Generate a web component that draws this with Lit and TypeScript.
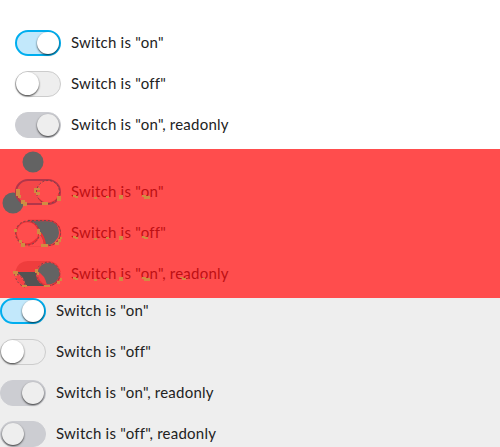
import { LitElement, html, svg, css } from "lit";
import { customElement, property } from "lit/decorators.js";

@customElement("switch-row")
class SwitchRow extends LitElement {
  @property() label = "";
  @property({ type: Boolean, reflect: true }) on = false;
  @property({ type: Boolean, reflect: true }) readonly = false;
  @property({ type: Boolean, reflect: true }) diff = false;
  static styles = css`
    :host { display: flex; align-items: center; gap: 10px; height: 26px; color: #222; }
    .track { box-sizing: border-box; width: 46px; height: 26px; border-radius: 13px; border: 1px solid #ccc;
      background: #eee; display: flex; align-items: center; padding: 0 1px 0 0; flex: none; }
    .thumb { width: 23px; height: 23px; border-radius: 50%; background: #fff; box-shadow: 0 1px 2px rgba(0,0,0,.75); margin-top: -1px; }
    :host([on]) .track { justify-content: flex-end; border: 2px solid #00aeef; background: #c2e8fb; padding: 0; }
    :host([on]) .thumb { width: 22px; height: 22px; margin-top: 0; }
    :host([readonly]) .track { background: #cccdd2; border: 1px solid #cccdd2; padding-right: 1px; }
    :host([readonly]) .thumb { background: #eee; width: 22px; height: 22px; margin-top: -1px; }
    :host([readonly]:not([on])) .track { padding-left: 1px; }
    .label { font: 15px/20px Lato, sans-serif; letter-spacing: .23px; white-space: pre; margin-bottom: 2px; }
    :host([diff]) { color: #bd1014; }
  `;
  render() {
    return html`${this.diff ? html`<slot></slot>` : html`<div class="track"><div class="thumb"></div></div>`}
      <span class="label">${this.label}</span>`;
  }
}

const marks = (list: number[][]) =>
  list.map(([x, y, w, h]) => svg`<rect class="mark" x=${x} y=${y} width=${w} height=${h}></rect>`);

@customElement("app-root")
class AppRoot extends LitElement {
  static styles = css`
    :host { display: flex; flex-direction: column; width: 500px; height: 447px; overflow: hidden; }
    section { display: flex; flex-direction: column; gap: 15px; box-sizing: border-box; height: 149px; padding: 30px 0 0 15px; }
    .plain { background: #fff; }
    .changed { background: #ff4d4d; position: relative; }
    .muted { background: #eee; padding: 0; }
    .art { width: 46px; height: 26px; overflow: visible; flex: none; display: block; }
    .overlay { position: absolute; left: 0; top: 0; width: 250px; height: 149px; }
    .mark { fill: #d08c42; }
    .gray { fill: #636363; }
    .dots { fill: none; stroke: #74474b; stroke-width: 1; stroke-dasharray: 2 2; }
    .rim { fill: none; stroke: #e03038; stroke-width: 1.3; }
    .streak { fill: none; stroke: #f22f33; stroke-width: 2; }
  `;
  render() {
    return html`
      <section class="plain">
        <switch-row on label='Switch is "on"'></switch-row>
        <switch-row label='Switch is "off"'></switch-row>
        <switch-row on readonly label='Switch is "on", readonly'></switch-row>
      </section>
      <section class="changed">
        <switch-row diff label='Switch is "on"'>
          <svg class="art" viewBox="0 0 46 26">
            <circle class="gray" cx="18" cy="-17" r="10.5"></circle>
            <circle class="gray" cx="-2" cy="24" r="10.5"></circle>
            <rect x="1" y="1" width="44" height="24" rx="12" fill="#f44749" stroke="#b2364a" stroke-width="2"></rect>
            <circle cx="33" cy="13" r="11.3" fill="#ff4d4d"></circle>
            <path class="rim" d="M24 20a11.3 11.3 0 0 0 20-6"></path>
            <circle class="dots" cx="33" cy="13" r="11.5"></circle>
          </svg>
        </switch-row>
        <switch-row diff label='Switch is "off"'>
          <svg class="art" viewBox="0 0 46 26">
            <path class="gray" d="M13 1h20q6 0 9 4q2 4 2 8q0 4-3 7q-3 5-9 5H13z"></path>
            <path class="rim" d="M13 .5h20a12.5 12.5 0 0 1 0 25H13"></path>
            <path class="dots" d="M13 .5h20a12.5 12.5 0 0 1 0 25H13"></path>
            <path d="M12 26h17q0-8-6-13z" fill="#ff4d4d"></path>
            <circle cx="12.5" cy="13" r="12" fill="#ff4d4d"></circle>
            <path class="streak" d="M24 12q5 4 6 13M5 22q9 6 17-3"></path>
            <circle class="rim" cx="12.5" cy="13" r="11.3"></circle>
            <circle class="dots" cx="12.5" cy="13" r="12"></circle>
          </svg>
        </switch-row>
        <switch-row diff label='Switch is "on", readonly'>
          <svg class="art" viewBox="0 0 46 26">
            <path d="M0 11Q3 0 13 0h20q10 0 13 11z" fill="#ef3d3d"></path>
            <path d="M1 11h21q2 9 8 14H11Q9 15 1 11z" fill="#535353"></path>
            <path d="M1 13q8 4 9 12Q1 22 1 13z" fill="#f84045"></path>
            <circle cx="33" cy="13" r="12" fill="#f44245"></circle>
            <circle class="gray" cx="33.5" cy="12.5" r="10.8"></circle>
            <path d="M22 10q8 4 10 14-9-2-10-14z" fill="#f44245"></path>
            <path class="rim" d="M22 16q5 11 15 8 6-2 8-9"></path>
            <circle class="dots" cx="33" cy="13" r="11.8"></circle>
            <path class="dots" d="M0 13q1 10 10 13M2 13q8 4 8 13"></path>
          </svg>
        </switch-row>
        <svg class="overlay" viewBox="0 149 250 149">
          ${marks([
            [16, 189, 4, 7], [18, 195, 3, 3], [21, 200, 4, 4], [23, 202, 4, 4], [34, 188, 6, 2], [34, 190, 2, 3], [36, 192, 4, 3], [42, 202, 6, 3], [57, 196, 4, 5],
            [14, 229, 3, 3], [19, 240, 3, 3], [21, 243, 4, 4], [37, 229, 3, 5], [39, 232, 2, 3], [41, 244, 7, 3], [55, 242, 4, 3], [58, 239, 3, 3], [60, 237, 2, 2],
            [13, 271, 5, 3], [15, 274, 2, 2], [35, 269, 3, 4], [37, 272, 2, 3], [22, 285, 5, 2], [44, 285, 6, 2], [57, 281, 3, 3], [60, 278, 2, 3],
            [142, 236, 3, 2], [144, 237, 4, 2], [180, 277, 3, 1], [182, 278, 4, 2], [202, 278, 3, 1],
          ])}
          ${[0, 41, 82].map((dy) => marks([[73, 195 + dy, 3, 2], [75, 196 + dy, 3, 2], [94, 197 + dy, 3, 2], [106, 196 + dy, 3, 2], [119, 195 + dy, 4, 4]]))}
          ${[0, 82].map((dy) => marks([[142, 195 + dy, 4, 2], [144, 196 + dy, 6, 3]]))}
        </svg>
      </section>
      <section class="muted">
        <switch-row on label='Switch is "on"'></switch-row>
        <switch-row label='Switch is "off"'></switch-row>
        <switch-row on readonly label='Switch is "on", readonly'></switch-row>
        <switch-row readonly label='Switch is "off", readonly'></switch-row>
      </section>`;
  }
}
